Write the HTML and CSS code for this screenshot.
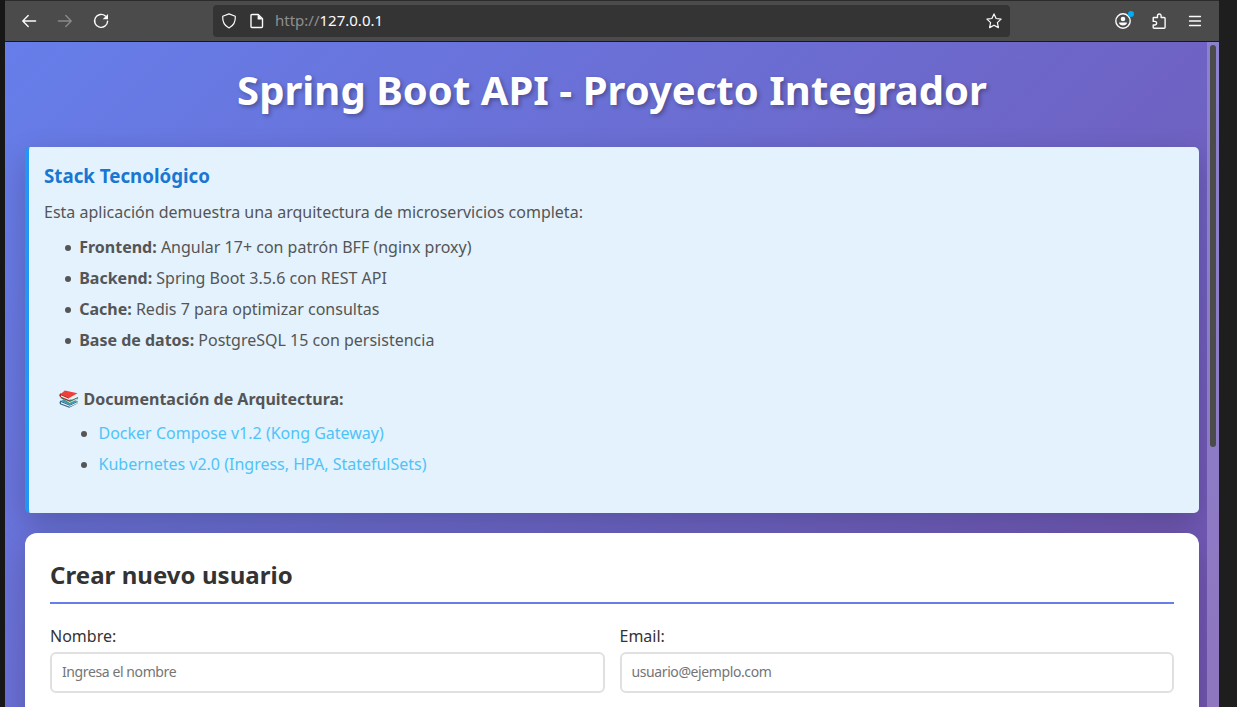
FILE: index.html
```html
<!DOCTYPE html>
<html lang="es">
<head>
<meta charset="utf-8">
<title>Spring Boot API - Proyecto Integrador</title>
<link rel="stylesheet" href="styles.css">
</head>
<body>
<div class="window">
  <header class="toolbar">
    <nav class="nav-buttons">
      <svg class="icon" viewBox="0 0 16 16"><path d="M14.600 8H2M7.200 2.600 1.800 8l5.400 5.400"/></svg>
      <svg class="icon dim" viewBox="0 0 16 16"><path d="M1.400 8H14M8.800 2.600 14.200 8l-5.400 5.400"/></svg>
      <svg class="icon" viewBox="0 0 16 16"><path d="M14.600 8.200a6.500 6.500 0 1 1-2.200-5.200"/><path class="solid" d="M15 .9v5.300H9.700z"/></svg>
    </nav>
    <div class="urlbar">
      <svg class="icon thin" viewBox="0 0 16 16"><path d="M8 .9 14.300 3.300c.3 4.900-1.200 9.200-6.300 11.700C2.900 12.500 1.400 8.200 1.700 3.300z"/></svg>
      <svg class="icon page-icon" viewBox="0 0 16 16"><path d="M3 1.500h6.200l4.300 4.300v7.700q0 1-1 1H3q-1 0-1-1v-11q0-1 1-1z"/><path class="solid" d="M8.600 1.500v4.900h4.900z"/></svg>
      <div class="address"><span class="scheme">http://</span>127.0.0.1</div>
      <svg class="icon thin" viewBox="0 0 16 16"><path d="m8 .9 2.100 4.600 5 .6-3.700 3.500 1 5L8 12.200l-4.400 2.400 1-5L.9 6.100l5-.6z"/></svg>
    </div>
    <div class="tools">
      <svg class="icon account" viewBox="0 0 18 18"><circle cx="8" cy="10" r="7.200"/><circle class="solid" cx="8" cy="8" r="2.300"/><path class="solid" d="M4 11.500h8c0 4-8 4-8 0z"/><circle class="badge" cx="16" cy="3" r="3"/></svg>
      <svg class="icon puzzle" viewBox="0 0 16 16"><path d="M2.700 4.500H6.500V2.800a1.800 1.800 0 0 1 3.600 0v1.700h3q1 0 1 1v8.700q0 1-1 1H3.200q-1 0-1-1V12h1.600a1.800 1.800 0 0 0 0-3.600H2.200V5q0-.5.5-.5z"/></svg>
      <svg class="icon menu" viewBox="0 0 16 16"><path d="M2.500 3.500h11M2.500 8h11M2.500 12.500h11"/></svg>
    </div>
  </header>
  <div class="viewport">
    <main class="page">
      <h1 class="title">Spring Boot API - Proyecto Integrador</h1>
      <section class="stack">
        <h3 class="stack-title">Stack Tecnológico</h3>
        <p class="intro">Esta aplicación demuestra una arquitectura de microservicios completa:</p>
        <ul class="list">
          <li><strong>Frontend:</strong> Angular 17+ con patrón BFF (nginx proxy)</li>
          <li><strong>Backend:</strong> Spring Boot 3.5.6 con REST API</li>
          <li><strong>Cache:</strong> Redis 7 para optimizar consultas</li>
          <li><strong>Base de datos:</strong> PostgreSQL 15 con persistencia</li>
        </ul>
        <div class="docs">
          <div class="docs-title">
            <svg class="books" viewBox="0 0 20 18"><path fill="#2d668b" d="m.5 12.500 1-2 9.500 4.500 8-4v2.500L10.500 18 1 14.500z"/><path fill="#edf1f3" d="m2 12 9 4 8-4v1.300L11 17l-9-3.500z"/><path fill="#3a99bd" d="m2 10.800 6-2.300 11 2.500-8 4.200z"/><path fill="#397b62" d="m1.500 8 1-1.500 9 4L19.500 7v2L11 13.500z"/><path fill="#e5ebe5" d="m4 8.700 7.200 3.300 7.800-3.700v1L11 13z"/><path fill="#a7242a" d="M1.500 3 .2 5l.8 2 9 4V7z"/><path fill="#f2eeee" d="m2 5.200 8.200 3.500L18.500 4v1.500L10.200 10 2 6.700z"/><path fill="#ec4038" d="M1.500 4 6 .3 19 3l-8.500 5z"/></svg>
            <strong>Documentación de Arquitectura:</strong>
          </div>
          <ul class="list links">
            <li><a class="link">Docker Compose v1.2 (Kong Gateway)</a></li>
            <li><a class="link">Kubernetes v2.0 (Ingress, HPA, StatefulSets)</a></li>
          </ul>
        </div>
      </section>
      <section class="card">
        <h2 class="card-title">Crear nuevo usuario</h2>
        <form class="form">
          <label class="field">Nombre:<input class="input" type="text" placeholder="Ingresa el nombre"></label>
          <label class="field">Email:<input class="input" type="email" placeholder="usuario@ejemplo.com"></label>
        </form>
      </section>
    </main>
    <div class="scrollbar"><div class="thumb"></div></div>
  </div>
</div>
</body>
</html>
```
FILE: styles.css
```css
* { box-sizing: border-box; }
body {
  margin: 0;
  height: 707px;
  overflow: hidden;
  background: linear-gradient(90deg, #171717 0 5px, #1e1e1e 5px);
  font-family: "Noto Sans", sans-serif;
  font-size: 16px;
}
.window { width: 1214px; height: 707px; margin-left: 5px; display: flex; flex-direction: column; }
.toolbar {
  height: 42px;
  flex: none;
  display: flex;
  align-items: center;
  padding: 0 16px;
  background: #4b4b4b;
  border-top: 1px solid #2b2b2b;
  border-bottom: 1px solid #181818;
}
.icon { display: block; width: 16px; height: 16px; flex: none; overflow: visible; fill: none; stroke: #fbfbfe; stroke-width: 1.4; stroke-linejoin: round; stroke-linecap: round; }
.icon .solid { fill: #fbfbfe; stroke: none; }
.icon .badge { fill: #00aef5; stroke: none; }
.thin { stroke-width: 1.2; }
.dim { stroke: #8a8a8c; }
.nav-buttons { display: flex; gap: 20px; width: 192px; }
.urlbar {
  width: 797px;
  height: 32px;
  display: flex;
  align-items: center;
  padding: 0 8px;
  background: #343434;
  border-radius: 4px;
}
.page-icon { margin-left: 12px; }
.address { flex: 1; margin-left: 10px; padding-bottom: 2px; color: #fbfbfe; font-size: 15px; line-height: 20px; }
.scheme { color: #8f8f90; }
.tools { margin-left: auto; display: flex; align-items: center; gap: 20px; }
.account { width: 18px; height: 18px; margin: -2px -2px 0 0; }
.menu { stroke-width: 1.3; }
.viewport {
  flex: 1;
  min-height: 0;
  display: flex;
  background: linear-gradient(135deg, #667eea 0%, #764ba2 100%) 0 0 / 100% 1095px no-repeat;
}
.page { flex: 1; padding: 20px 8px 0 20px; height: 665px; overflow: hidden; }
.title {
  margin: 0 0 30px;
  height: 55px;
  line-height: 55px;
  text-align: center;
  color: #fff;
  font-size: 40px;
  letter-spacing: .04px;
  text-shadow: 2px 2px 4px rgba(0, 0, 0, .3);
}
.stack {
  height: 366px;
  padding: 15px;
  background: #e3f2fd;
  border-left: 4px solid #2196f3;
  border-radius: 5px;
  box-shadow: 0 10px 30px rgba(0, 0, 0, .2);
  color: #555;
}
.stack-title { margin: 0 0 8px; font-size: 18.72px; line-height: 28px; color: #1976d2; }
.intro { margin: 0 0 6px; line-height: 28px; }
.list { margin: 0; padding-left: 35.2px; line-height: 31px; list-style: none; }
.list li::before {
  content: "";
  display: inline-block;
  width: 6px;
  height: 6px;
  margin: 0 8px 2px -14px;
  border-radius: 50%;
  background: #555;
}
.docs { margin-top: 28px; padding-left: 15px; }
.docs-title { display: flex; align-items: center; gap: 5px; height: 30px; margin-bottom: 4px; }
.books { width: 19.5px; height: 18px; }
.links { padding-left: 39.5px; }
.links li::before { margin-right: 12px; margin-left: -18px; }
.link { color: #4fc3f7; }
.card {
  height: 400px;
  margin-top: 20px;
  padding: 25px;
  background: #fff;
  border-radius: 12px;
  box-shadow: 0 10px 30px rgba(0, 0, 0, .2);
  color: #333;
}
.card-title { margin: 0 0 20px; height: 46px; font-size: 24px; line-height: 33px; letter-spacing: .05px; border-bottom: 2px solid #667eea; }
.form { display: grid; grid-template-columns: 1fr 1fr; gap: 15px; }
.field { display: flex; flex-direction: column; line-height: 24px; gap: 4px; }
.input {
  width: 100%;
  height: 41px;
  padding: 0 10px 2px;
  border: 2px solid #e0e0e0;
  border-radius: 6px;
  background: #fff;
  font-family: "Noto Sans", sans-serif;
  font-size: 14px;
  letter-spacing: -.4px;
}
.input::placeholder { color: #757575; }
.scrollbar { width: 12px; padding: 3px 3px 0; background: rgba(255, 255, 255, .2); }
.thumb { height: 402px; border-radius: 3px; background: #4b4b4b; }
```
